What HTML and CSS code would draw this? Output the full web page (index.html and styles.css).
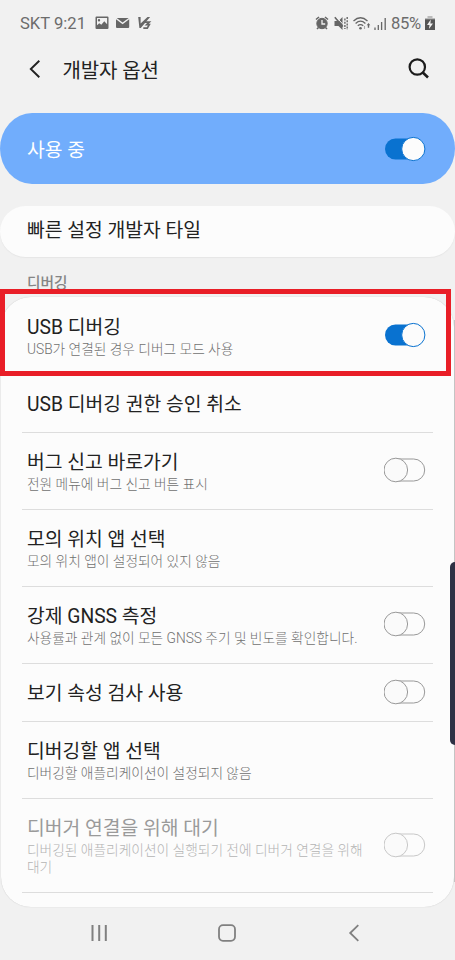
FILE: index.html
```html
<!DOCTYPE html>
<html lang="ko">
<head>
<meta charset="utf-8">
<title>개발자 옵션</title>
<link rel="stylesheet" href="styles.css">
</head>
<body>
<svg class="defs" width="0" height="0">
  <symbol id="on" viewBox="0 0 42 26">
    <rect x="1" y="2.5" width="36" height="21" rx="10.5" fill="#0972d0"/>
    <circle cx="29.3" cy="13" r="11.6" fill="#fcfcfc" stroke="#0972d0"/>
  </symbol>
  <symbol id="off" viewBox="0 0 42 26">
    <rect x="2" y="2" width="38.7" height="22" rx="11" fill="#fcfcfc" stroke="currentColor"/>
    <circle cx="11.8" cy="13" r="11.8" fill="#fafafa" stroke="currentColor"/>
  </symbol>
</svg>
<div class="phone">
  <header class="status">
    <span class="carrier">SKT 9:21</span>
    <svg class="notifications" width="60" height="16" viewBox="0 0 60 16">
      <path fill="#666" fill-rule="evenodd" d="M1.5 1.5h11q1 0 1 1v10.5q0 1-1 1h-11q-1 0-1-1V2.5q0-1 1-1zM2 3v7.2l2.3-2 2 1.6 3-3.6 2.8 3V3zM4 4a1.2 1.2 0 1 1 0 2.4A1.2 1.2 0 0 1 4 4z"/>
      <path fill="#666" d="M21 4.3l6.6 5 6.6-5V12q0 1-1 1H22q-1 0-1-1zM21.7 3h12L27.6 7.6z"/>
      <path fill="#666" d="M43.2 2h2.4v6.5L52.5 2h2.6L45.8 13h-1.4z"/>
      <path fill="none" stroke="#666" stroke-width="1.7" d="M50 7.2h4.3l-2.6 2.5h2.6l-2 3.5h-4"/>
    </svg>
    <svg class="signals" width="74" height="18" viewBox="0 0 74 18">
      <g fill="none" stroke="#666">
        <circle cx="7" cy="9.5" r="5.2" fill="#666"/>
        <path stroke-width="1.6" d="M1 5.5l3-2.5M10 3l3 2.5M3.5 13.5L2 15M10.5 13.5L12 15"/>
        <path stroke="#f1f1f1" stroke-width="1.3" d="M7 6v4h3.2"/>
      </g>
      <path fill="#666" d="M19.5 7h4l4-4v13l-4-4h-4z"/>
      <path d="M19.8 3.2l8 9.3" stroke="#666" stroke-width="1.6"/>
      <path d="M22 3.8l5.5 6" stroke="#f1f1f1" stroke-width="1"/>
      <path d="M29.9 4.5v10.5M32.2 3v13" fill="none" stroke="#666" stroke-width="1.4" stroke-dasharray="2 1.2"/>
      <g fill="none" stroke="#666" stroke-width="1.3">
        <path d="M38.5 7q7-6.5 14 0M40.6 9.4q4.9-4.5 9.8 0M42.8 11.8q2.7-2.4 5.4 0"/>
      </g>
      <circle cx="45.5" cy="14.3" r="1.3" fill="#666"/>
      <path d="M49.5 12v3" stroke="#aaa" stroke-width="1.1"/>
      <path d="M53.5 9l1.8 2.2h-1.1v2.6h-1.4v-2.6h-1.1z" fill="#666"/>
      <path d="M60 13.5V16M63.3 11v5M66.6 8v8M70.2 4v12" fill="none" stroke="#666" stroke-width="1.3"/>
    </svg>
    <span class="percent">85%</span>
    <svg class="battery" width="10" height="16" viewBox="0 0 10 16">
      <path fill="#bbb" d="M2.5 1h5v2H10v2H0V3h2.5z"/>
      <path fill="#555" d="M0 4.3h10V15H0z"/>
      <path fill="#f1f1f1" d="M5.8 4.5L2 10h2.5l-.6 4L8 8.5H5.4z"/>
    </svg>
  </header>

  <div class="appbar">
    <svg class="back" width="12" height="20" viewBox="0 0 12 20"><path d="M10.3 1.7L1.8 10l8.5 8.3" fill="none" stroke="#222" stroke-width="1.9"/></svg>
    <h1>개발자 옵션</h1>
    <svg class="search" width="22" height="22" viewBox="0 0 22 22"><circle cx="9.3" cy="9" r="7.7" fill="none" stroke="#1c1c1c" stroke-width="2.2"/><path d="M14.5 14.3l5.5 5.2" stroke="#1c1c1c" stroke-width="2.6"/></svg>
  </div>

  <section class="master"><span>사용 중</span><svg class="switch"><use href="#on"/></svg></section>
  <section class="tile">빠른 설정 개발자 타일</section>
  <h2>디버깅</h2>

  <main class="list">
    <div class="row first">
      <div class="text"><div class="title">USB 디버깅</div><div class="sub">USB가 연결된 경우 디버그 모드 사용</div></div>
      <svg class="switch"><use href="#on"/></svg>
      <div class="highlight"></div>
    </div>
    <div class="row single">
      <div class="text"><div class="title">USB 디버깅 권한 승인 취소</div></div>
    </div>
    <div class="row">
      <div class="text"><div class="title">버그 신고 바로가기</div><div class="sub">전원 메뉴에 버그 신고 버튼 표시</div></div>
      <svg class="switch"><use href="#off"/></svg>
    </div>
    <div class="row">
      <div class="text"><div class="title">모의 위치 앱 선택</div><div class="sub">모의 위치 앱이 설정되어 있지 않음</div></div>
    </div>
    <div class="row">
      <div class="text"><div class="title">강제 GNSS 측정</div><div class="sub">사용률과 관계 없이 모든 GNSS 주기 및 빈도를 확인합니다.</div></div>
      <svg class="switch"><use href="#off"/></svg>
    </div>
    <div class="row single">
      <div class="text"><div class="title">보기 속성 검사 사용</div></div>
      <svg class="switch"><use href="#off"/></svg>
    </div>
    <div class="row">
      <div class="text"><div class="title">디버깅할 앱 선택</div><div class="sub">디버깅할 애플리케이션이 설정되지 않음</div></div>
    </div>
    <div class="row disabled">
      <div class="text"><div class="title">디버거 연결을 위해 대기</div><div class="sub">디버깅된 애플리케이션이 실행되기 전에 디버거 연결을 위해<br>대기</div></div>
      <svg class="switch"><use href="#off"/></svg>
    </div>
  </main>

  <nav class="navbar">
    <svg width="18" height="18" viewBox="0 0 18 18"><path d="M2.5 1v16M9.2 1v16M15.8 1v16" stroke="#808080" stroke-width="2"/></svg>
    <svg width="18" height="18" viewBox="0 0 18 18"><rect x="1" y="1.2" width="16" height="15.6" rx="4" fill="none" stroke="#808080" stroke-width="1.8"/></svg>
    <svg width="18" height="18" viewBox="0 0 18 18"><path d="M13.3 1.2L5.2 9l8.1 7.8" fill="none" stroke="#808080" stroke-width="1.8"/></svg>
  </nav>
  <div class="scrollbar"></div>
  <div class="edge"></div>
</div>
</body>
</html>
```
FILE: styles.css
```css
* { box-sizing: border-box; }
body { margin: 0; background: #f1f1f1; font-family: Roboto, "Noto Sans CJK KR", sans-serif; color: #222; }
.defs { position: absolute; }
svg { display: block; flex: none; }
.phone { position: relative; width: 455px; height: 960px; overflow: hidden; display: flex; flex-direction: column; }

.status { height: 46px; display: flex; align-items: center; padding: 0 20px 0 20px; color: #6c6c6c; font-size: 16.6px; }
.carrier { width: 75px; white-space: nowrap; }
.signals { margin-left: auto; }
.percent { width: 31px; margin-left: 2px; letter-spacing: -0.3px; }
.battery { margin-left: 3px; }

.appbar { height: 47px; display: flex; align-items: center; padding: 0 25px 1px 29px; }
h1 { margin: 0 auto 0 21.5px; padding-top: 3px; font-size: 20px; line-height: 28px; font-weight: 400; letter-spacing: -0.1px; }

.master { height: 71px; margin-top: 20px; padding: 0 29px 0 27px; border-radius: 32px / 35.5px; background: #71adfc; color: #fff; display: flex; align-items: center; justify-content: space-between; font-size: 19.3px; }
.switch { width: 42px; height: 26px; overflow: visible; color: #999; }
.tile { height: 51px; margin-top: 22px; padding: 0 27px; border-radius: 26px; background: #fcfcfc; font-size: 19.3px; line-height: 49px; box-shadow: 0 1px 1px #e6e6e6; }
h2 { height: 40px; margin: 0; padding: 15px 27px 0; font-size: 14.7px; line-height: 22px; font-weight: 500; color: #858585; }

.list { height: 610px; background: #fcfcfc; border-radius: 30px; box-shadow: 0 0 1px #bbb; margin: 0 1px; }
.row { position: relative; height: 77px; margin: 0 21px; padding: 16px 7px 0 5px; border-bottom: 1px solid #ddd; display: flex; justify-content: space-between; }
.row .switch { margin-top: 8px; }
.text { white-space: nowrap; }
.title { font-size: 19.3px; line-height: 27px; }
.sub { font-size: 13.73px; line-height: 17px; font-weight: 300; color: #707070; }
.first { height: 78px; padding-top: 17px; }
.single { height: 58px; padding-top: 16px; }
.single .switch { margin-top: -1px; }
.disabled { height: 94px; color: #9a9a9a; }
.disabled .sub { color: #b4b4b4; }
.disabled .switch { margin-top: 17px; color: #c8c8c8; }
.highlight { position: absolute; left: -22px; top: -8px; width: 451px; height: 87px; border: 5px solid #e91e27; }

.navbar { height: 53px; display: flex; justify-content: space-between; align-items: center; padding: 0 92px 2px 90px; }
.scrollbar { position: absolute; right: 0; top: 320px; width: 1px; height: 562px; background: #c4c4c4; }
.edge { position: absolute; right: 0; top: 562px; width: 5px; height: 183px; border-radius: 5px 0 0 5px; background: #2e3144; }
```
